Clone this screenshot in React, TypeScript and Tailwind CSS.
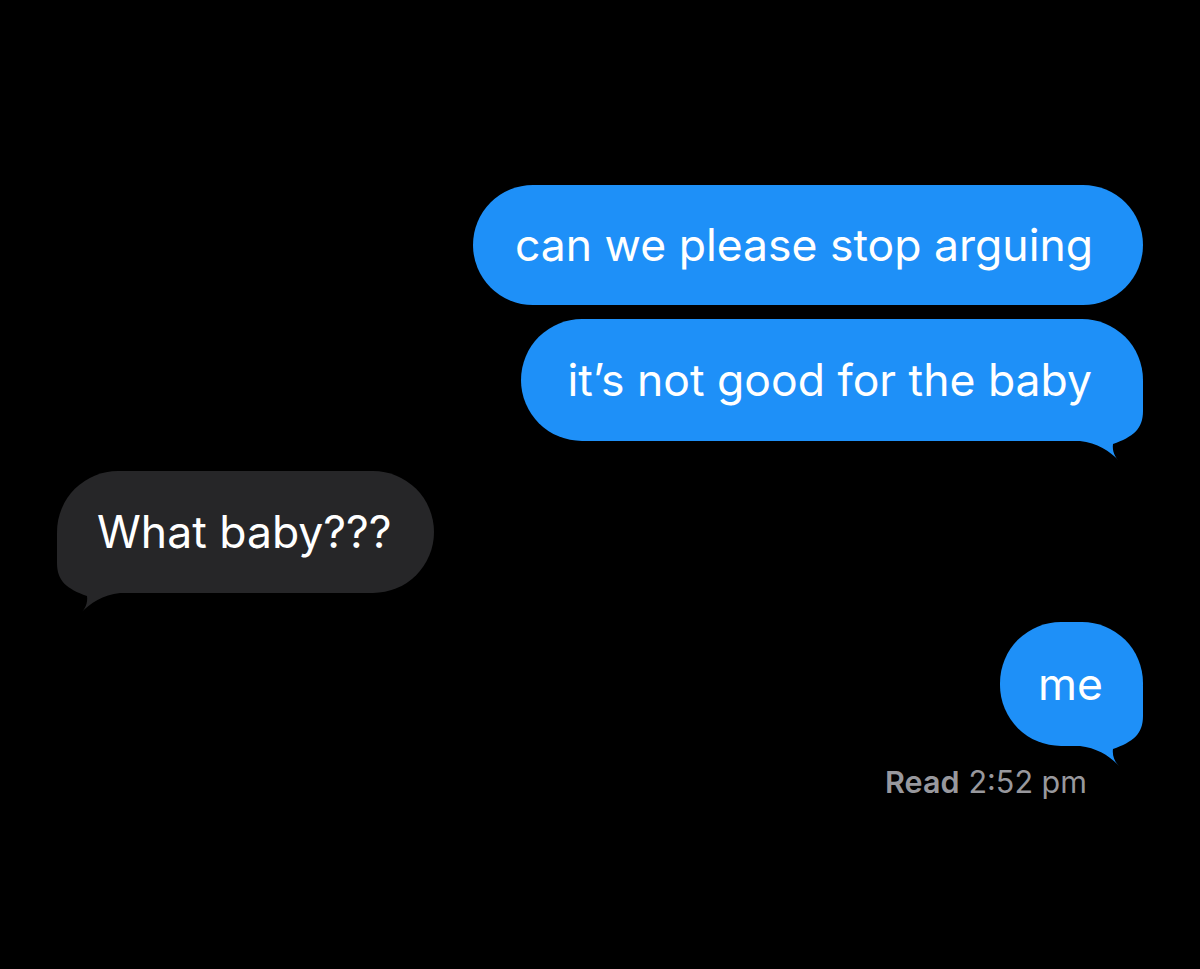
import React from "react";

const BLUE = "#1e90f8";
const GRAY = "#262628";

const Tail = ({ color, flip }: { color: string; flip?: boolean }) => (
  <svg
    width="70"
    height="82"
    viewBox="0 0 70 82"
    className={
      flip
        ? "absolute left-0 bottom-[-22px] -scale-x-100"
        : "absolute right-0 bottom-[-22px]"
    }
  >
    <path
      d="M7 60 C24 62 37 70 46 80 C42 76 39 70 40 63 C60 56 70 48 70 30 L70 0 L0 0 L0 60 Z"
      fill={color}
    />
  </svg>
);

const Bubble = ({
  text,
  mine,
  tail,
  cls,
}: {
  text: string;
  mine?: boolean;
  tail?: boolean;
  cls: string;
}) => (
  <div className={mine ? "flex justify-end" : "flex justify-start"}>
    <div
      className={`relative flex items-center rounded-[61px] text-[44.5px] leading-none text-white ${cls}`}
      style={{ backgroundColor: mine ? BLUE : GRAY }}
    >
      {tail && <Tail color={mine ? BLUE : GRAY} flip={!mine} />}
      <span className="relative">{text}</span>
    </div>
  </div>
);

export default function App() {
  return (
    <div
      className="flex h-[969px] w-full flex-col bg-black px-[57px] pt-[185px]"
      style={{ fontFamily: "Inter, 'Noto Sans', sans-serif" }}
    >
      <Bubble
        text="can we please stop arguing"
        mine
        cls="h-[120px] pl-[42px] pr-[50px]"
      />
      <div className="mt-[14px]">
        <Bubble
          text="it’s not good for the baby"
          mine
          tail
          cls="h-[122px] pl-[46px] pr-[51px]"
        />
      </div>
      <div className="mt-[30px]">
        <Bubble text="What baby???" tail cls="h-[122px] pl-[40px] pr-[42px]" />
      </div>
      <div className="mt-[29px]">
        <Bubble
          text="me"
          mine
          tail
          cls="h-[124px] w-[143px] justify-center pr-[2px]"
        />
      </div>
      <div className="mt-[21px] flex justify-end pr-[56px] text-[30.5px] leading-none text-[#98989d]">
        <span className="font-semibold">Read</span>
        <span className="ml-[9px]">2:52 pm</span>
      </div>
    </div>
  );
}
